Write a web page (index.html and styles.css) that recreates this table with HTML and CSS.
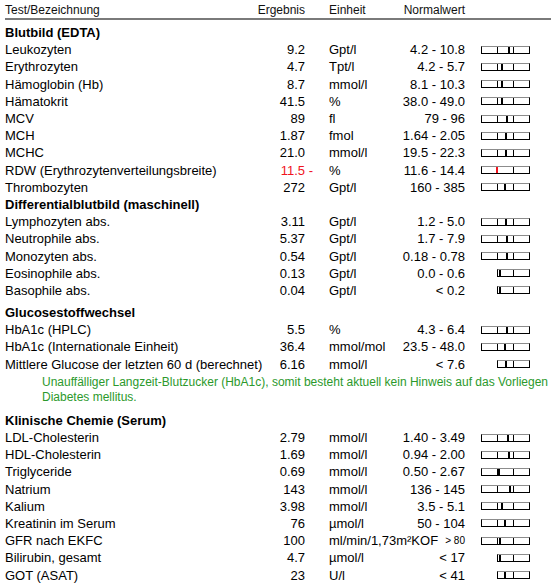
FILE: index.html
```html
<!DOCTYPE html>
<html>
<head>
  <meta charset="utf-8">
  <title>Laborbefund</title>
  <link rel="stylesheet" href="styles.css">
</head>
<body>
<div class="report">
  <div class="row head">
    <span class="name">Test/Bezeichnung</span>
    <span class="res">Ergebnis</span>
    <span class="unit">Einheit</span>
    <span class="range">Normalwert</span>
  </div>

  <section class="group first">
    <h2>Blutbild (EDTA)</h2>
    <div class="row"><span class="name">Leukozyten</span><span class="res">9.2</span><span class="unit">Gpt/l</span><span class="range">4.2 - 10.8</span><span class="scale"><span class="bar"><i></i><i></i><i></i><b style="left:26px"></b></span></span></div>
    <div class="row"><span class="name">Erythrozyten</span><span class="res">4.7</span><span class="unit">Tpt/l</span><span class="range">4.2 - 5.7</span><span class="scale"><span class="bar"><i></i><i></i><i></i><b style="left:19px"></b></span></span></div>
    <div class="row"><span class="name">Hämoglobin (Hb)</span><span class="res">8.7</span><span class="unit">mmol/l</span><span class="range">8.1 - 10.3</span><span class="scale"><span class="bar"><i></i><i></i><i></i><b style="left:19px"></b></span></span></div>
    <div class="row"><span class="name">Hämatokrit</span><span class="res">41.5</span><span class="unit">%</span><span class="range">38.0 - 49.0</span><span class="scale"><span class="bar"><i></i><i></i><i></i><b style="left:19px"></b></span></span></div>
    <div class="row"><span class="name">MCV</span><span class="res">89</span><span class="unit">fl</span><span class="range">79 - 96</span><span class="scale"><span class="bar"><i></i><i></i><i></i><b style="left:24px"></b></span></span></div>
    <div class="row"><span class="name">MCH</span><span class="res">1.87</span><span class="unit">fmol</span><span class="range">1.64 - 2.05</span><span class="scale"><span class="bar"><i></i><i></i><i></i><b style="left:23px"></b></span></span></div>
    <div class="row"><span class="name">MCHC</span><span class="res">21.0</span><span class="unit">mmol/l</span><span class="range">19.5 - 22.3</span><span class="scale"><span class="bar"><i></i><i></i><i></i><b style="left:23px"></b></span></span></div>
    <div class="row"><span class="name">RDW (Erythrozytenverteilungsbreite)</span><span class="res low">11.5<span class="flag"> -</span></span><span class="unit">%</span><span class="range">11.6 - 14.4</span><span class="scale"><span class="bar"><i></i><i></i><i></i><b class="out" style="left:14px"></b></span></span></div>
    <div class="row"><span class="name">Thrombozyten</span><span class="res">272</span><span class="unit">Gpt/l</span><span class="range">160 - 385</span><span class="scale"><span class="bar"><i></i><i></i><i></i><b style="left:22px"></b></span></span></div>

    <h2>Differentialblutbild (maschinell)</h2>
    <div class="row"><span class="name">Lymphozyten abs.</span><span class="res">3.11</span><span class="unit">Gpt/l</span><span class="range">1.2 - 5.0</span><span class="scale"><span class="bar"><i></i><i></i><i></i><b style="left:23px"></b></span></span></div>
    <div class="row"><span class="name">Neutrophile abs.</span><span class="res">5.37</span><span class="unit">Gpt/l</span><span class="range">1.7 - 7.9</span><span class="scale"><span class="bar"><i></i><i></i><i></i><b style="left:24px"></b></span></span></div>
    <div class="row"><span class="name">Monozyten abs.</span><span class="res">0.54</span><span class="unit">Gpt/l</span><span class="range">0.18 - 0.78</span><span class="scale"><span class="bar"><i></i><i></i><i></i><b style="left:24px"></b></span></span></div>
    <div class="row"><span class="name">Eosinophile abs.</span><span class="res">0.13</span><span class="unit">Gpt/l</span><span class="range">0.0 - 0.6</span><span class="scale"><span class="bar short"><i></i><i></i><b style="left:1px"></b></span></span></div>
    <div class="row"><span class="name">Basophile abs.</span><span class="res">0.04</span><span class="unit">Gpt/l</span><span class="range">&lt; 0.2</span><span class="scale"><span class="bar short"><i></i><i></i><b style="left:1px"></b></span></span></div>
  </section>

  <section class="group">
    <h2>Glucosestoffwechsel</h2>
    <div class="row"><span class="name">HbA1c (HPLC)</span><span class="res">5.5</span><span class="unit">%</span><span class="range">4.3 - 6.4</span><span class="scale"><span class="bar"><i></i><i></i><i></i><b style="left:24px"></b></span></span></div>
    <div class="row"><span class="name">HbA1c (Internationale Einheit)</span><span class="res">36.4</span><span class="unit">mmol/mol</span><span class="range">23.5 - 48.0</span><span class="scale"><span class="bar"><i></i><i></i><i></i><b style="left:22px"></b></span></span></div>
    <div class="row"><span class="name">Mittlere Glucose der letzten 60 d (berechnet)</span><span class="res">6.16</span><span class="unit">mmol/l</span><span class="range">&lt; 7.6</span><span class="scale"><span class="bar short"><i></i><i></i><b style="left:7px"></b></span></span></div>
    <p class="note">Unauffälliger Langzeit-Blutzucker (HbA1c), somit besteht aktuell kein Hinweis auf das Vorliegen<br>Diabetes mellitus.</p>
  </section>

  <section class="group chem">
    <h2>Klinische Chemie (Serum)</h2>
    <div class="row"><span class="name">LDL-Cholesterin</span><span class="res">2.79</span><span class="unit">mmol/l</span><span class="range">1.40 - 3.49</span><span class="scale"><span class="bar"><i></i><i></i><i></i><b style="left:25px"></b></span></span></div>
    <div class="row"><span class="name">HDL-Cholesterin</span><span class="res">1.69</span><span class="unit">mmol/l</span><span class="range">0.94 - 2.00</span><span class="scale"><span class="bar"><i></i><i></i><i></i><b style="left:26px"></b></span></span></div>
    <div class="row"><span class="name">Triglyceride</span><span class="res">0.69</span><span class="unit">mmol/l</span><span class="range">0.50 - 2.67</span><span class="scale"><span class="bar"><i></i><i></i><i></i><b class="wide" style="left:15px"></b></span></span></div>
    <div class="row"><span class="name">Natrium</span><span class="res">143</span><span class="unit">mmol/l</span><span class="range">136 - 145</span><span class="scale"><span class="bar"><i></i><i></i><i></i><b style="left:27px"></b></span></span></div>
    <div class="row"><span class="name">Kalium</span><span class="res">3.98</span><span class="unit">mmol/l</span><span class="range">3.5 - 5.1</span><span class="scale"><span class="bar"><i></i><i></i><i></i><b style="left:19px"></b></span></span></div>
    <div class="row"><span class="name">Kreatinin im Serum</span><span class="res">76</span><span class="unit">µmol/l</span><span class="range">50 - 104</span><span class="scale"><span class="bar"><i></i><i></i><i></i><b style="left:22px"></b></span></span></div>
    <div class="row"><span class="name">GFR nach EKFC</span><span class="res">100</span><span class="unit">ml/min/1,73m²KOF</span><span class="range small">&gt; 80</span><span class="scale"><span class="bar"><i></i><i></i><i></i><b style="left:17px"></b></span></span></div>
    <div class="row"><span class="name">Bilirubin, gesamt</span><span class="res">4.7</span><span class="unit">µmol/l</span><span class="range">&lt; 17</span><span class="scale"><span class="bar short"><i></i><i></i><b style="left:1px"></b></span></span></div>
    <div class="row"><span class="name">GOT (ASAT)</span><span class="res">23</span><span class="unit">U/l</span><span class="range">&lt; 41</span><span class="scale"><span class="bar short"><i></i><i></i><b style="left:6px"></b></span></span></div>
  </section>
</div>
</body>
</html>
```

FILE: styles.css
```css
body {
  margin: 0;
  background: #fff;
  color: #000;
  font-family: "Liberation Sans", Arial, sans-serif;
}

.report {
  padding-left: 5px;
}

.row {
  display: grid;
  grid-template-columns: 250px 50px 95px 65px 65px;
  align-items: center;
  height: 17.2px;
  font-size: 13px;
  line-height: 15px;
  white-space: nowrap;
}

.head {
  height: auto;
  font-size: 12px;
  line-height: 14px;
  padding: 3px 0 1px;
  border-bottom: 2px solid #7a7a7a;
  color: #111;
}

.res {
  text-align: right;
}

.res.low {
  color: #f0141e;
}

.res .flag {
  margin-right: -8px;
}

.unit {
  padding-left: 24px;
}

.range {
  text-align: right;
}

.range.small {
  font-size: 10px;
}

.scale {
  display: flex;
  justify-content: flex-end;
}

/* three boxes: below / normal / above */
.bar {
  position: relative;
  display: grid;
  grid-template-columns: 15px 16px 16px;
  height: 6px;
  border: 1px solid #000;
  border-top-color: #8c8c8c;
}

.bar.short {
  grid-template-columns: 15px 16px;
}

.bar i {
  border-left: 1px solid #000;
}

.bar i:first-child {
  border-left: 0;
}

.bar b {
  position: absolute;
  top: 0;
  bottom: 0;
  width: 2px;
  background: #000;
}

.bar b.wide {
  width: 3px;
}

.bar b.out {
  background: #f0141e;
}

h2 {
  margin: 0;
  font-size: 13px;
  font-weight: bold;
  line-height: 17.2px;
  height: 17.2px;
}

.group.first {
  margin-top: 4px;
}

.group {
  margin-top: 5px;
}

.group.chem {
  margin-top: 7px;
}

.note {
  margin: 2px 0 0;
  padding-left: 37px;
  font-size: 12px;
  line-height: 15px;
  color: #2b992b;
  white-space: nowrap;
}
```
